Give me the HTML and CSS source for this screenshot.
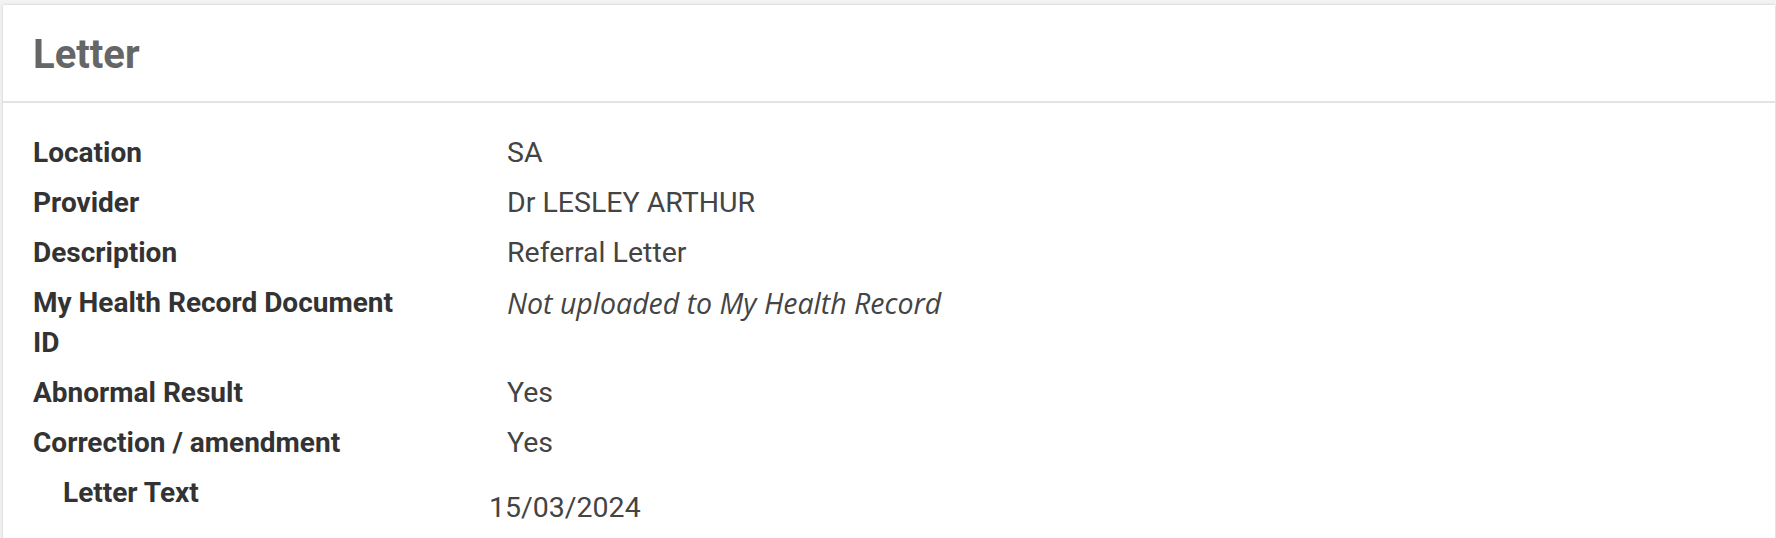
FILE: index.html
```html
<!DOCTYPE html>
<html lang="en">
<head>
<meta charset="utf-8">
<title>Letter</title>
<link rel="stylesheet" href="styles.css">
</head>
<body>
<div class="card">
  <div class="card-header">
    <h1 class="card-title">Letter</h1>
  </div>
  <div class="card-body">
    <div class="row">
      <div class="label">Location</div>
      <div class="value">SA</div>
    </div>
    <div class="row">
      <div class="label">Provider</div>
      <div class="value">Dr LESLEY ARTHUR</div>
    </div>
    <div class="row">
      <div class="label">Description</div>
      <div class="value">Referral Letter</div>
    </div>
    <div class="row">
      <div class="label">My Health Record Document ID</div>
      <div class="value value-muted">Not uploaded to My Health Record</div>
    </div>
    <div class="row">
      <div class="label">Abnormal Result</div>
      <div class="value">Yes</div>
    </div>
    <div class="row">
      <div class="label">Correction / amendment</div>
      <div class="value">Yes</div>
    </div>
    <div class="row row-sub">
      <div class="label label-sub">Letter Text</div>
      <div class="value value-date">15/03/2024</div>
    </div>
  </div>
</div>
</body>
</html>
```
FILE: styles.css
```css
html, body {
  margin: 0;
  padding: 0;
}
body {
  background: #f3f3f3;
  font-family: Roboto, "Liberation Sans", sans-serif;
  height: 538px;
  overflow: hidden;
}
.card {
  margin: 5px 1px 0 3px;
  background: #ffffff;
  box-shadow: 0 0 3px rgba(0, 0, 0, 0.18);
  min-height: 600px;
}
.card-header {
  height: 98px;
  box-sizing: border-box;
  padding: 25px 30px 0;
  border-bottom: 2px solid #e4e4e4;
}
.card-title {
  margin: 0;
  font-family: Roboto, "Liberation Sans", sans-serif;
  font-weight: 700;
  font-size: 40px;
  line-height: 50px;
  color: #666666;
}
.card-body {
  padding: 25px 30px 0;
}
.row {
  display: grid;
  grid-template-columns: 370px 1fr;
  column-gap: 104px;
  padding: 5px 0;
}
.label {
  font-weight: 700;
  font-size: 28px;
  line-height: 40px;
  color: #333333;
}
.value {
  font-size: 28.5px;
  line-height: 40px;
  color: #444444;
}
.value-muted {
  font-family: "Open Sans", "Noto Sans", sans-serif;
  font-style: italic;
  font-size: 28.5px;
}
.label-sub {
  padding-left: 30px;
}
.value-date {
  margin-top: 15px;
  margin-left: -18px;
}
```
